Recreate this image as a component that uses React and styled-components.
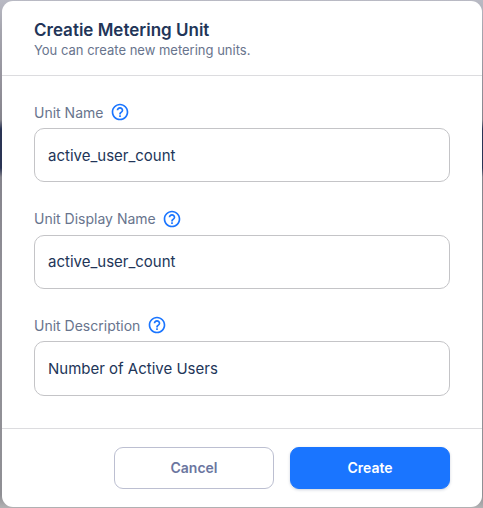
import React from "react";
import styled, { createGlobalStyle } from "styled-components";
import { MdHelpOutline } from "react-icons/md";

const GlobalStyle = createGlobalStyle`
  *, *::before, *::after { box-sizing: border-box; }
  body { margin: 0; }
  button, input { font-family: inherit; }
`;

const Backdrop = styled.div`
  width: 483px;
  height: 508px;
  padding: 1px 1.5px 1px 2px;
  overflow: hidden;
  font-family: Inter, sans-serif;
  background: linear-gradient(
    to bottom,
    #b9bac4 0,
    #a5a5ae 30px,
    #918f98 90px,
    #85848c 120px,
    #2a3454 129px,
    #2a3454 168px,
    #85848c 177px,
    #939299 300px,
    #8f8f94 495px,
    #b0b0b2 507px
  );
`;

const Dialog = styled.form`
  display: flex;
  flex-direction: column;
  height: 506px;
  border-radius: 11px;
  background: #fff;
`;

const Header = styled.header`
  height: 75px;
  padding: 18px 32px 0;
  border-bottom: 1px solid #dcdcdf;
`;

const Title = styled.h1`
  margin: 0;
  font-size: 17px;
  line-height: 22px;
  font-weight: 600;
  color: #223558;
`;

const Subtitle = styled.p`
  margin: 0;
  font-size: 13px;
  line-height: 18px;
  color: #68748d;
`;

const Body = styled.div`
  flex: 1;
  display: flex;
  flex-direction: column;
  gap: 26.2px;
  padding: 26px 31.5px 0 32px;
`;

const Label = styled.label`
  display: flex;
  align-items: center;
  gap: 6.2px;
  height: 20px;
  margin-bottom: 6px;
  font-size: 14px;
  color: #68748d;

  svg { color: #1a75ff; }
`;

const Input = styled.input`
  display: block;
  width: 100%;
  height: 54.45px;
  padding: 0 13px;
  border: 1px solid #c4c4c7;
  border-radius: 10px;
  outline: none;
  background: #fff;
  font-size: 15px;
  color: #223558;
`;

const Footer = styled.footer`
  display: flex;
  justify-content: flex-end;
  gap: 16px;
  height: 79px;
  padding: 18px 31.5px 0;
  border-top: 1px solid #dcdcdf;
`;

const Button = styled.button`
  width: 160px;
  height: 42px;
  padding: 0 0 2px;
  border: 1px solid ${(p) => (p.$primary ? "#1a75ff" : "#bcbfd1")};
  border-radius: 9px;
  background: ${(p) => (p.$primary ? "#1a75ff" : "#fff")};
  box-shadow: ${(p) => (p.$primary ? "0 1px 3px rgba(30, 50, 90, 0.22)" : "none")};
  font-size: 14px;
  font-weight: 600;
  color: ${(p) => (p.$primary ? "#fff" : "#6b769f")};
`;

const fields = [
  { id: "name", label: "Unit Name", value: "active_user_count" },
  { id: "display", label: "Unit Display Name", value: "active_user_count" },
  { id: "description", label: "Unit Description", value: "Number of Active Users" },
];

export default function App() {
  return (
    <Backdrop>
      <GlobalStyle />
      <Dialog>
        <Header>
          <Title>Creatie Metering Unit</Title>
          <Subtitle>You can create new metering units.</Subtitle>
        </Header>
        <Body>
          {fields.map((f) => (
            <div key={f.id}>
              <Label htmlFor={f.id}>
                {f.label}
                <MdHelpOutline size={20} />
              </Label>
              <Input id={f.id} defaultValue={f.value} />
            </div>
          ))}
        </Body>
        <Footer>
          <Button type="button">Cancel</Button>
          <Button type="button" $primary>Create</Button>
        </Footer>
      </Dialog>
    </Backdrop>
  );
}
